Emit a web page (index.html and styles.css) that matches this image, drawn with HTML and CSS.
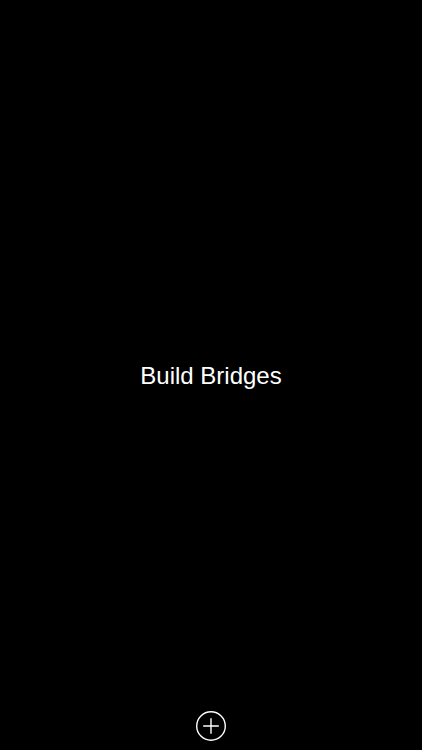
FILE: index.html
```html
<!DOCTYPE html>
<html lang="en">
<head>
<meta charset="utf-8">
<title>Build Bridges</title>
<link rel="stylesheet" href="styles.css">
</head>
<body>
<div class="screen">
  <div class="spacer"></div>
  <h1 class="title">Build Bridges</h1>
  <div class="footer">
    <button class="add-btn" aria-label="Add">
      <svg width="32" height="32" viewBox="0 0 32 32">
        <circle cx="16" cy="16" r="14.3" fill="none" stroke="#fff" stroke-width="1.4"/>
        <path d="M16 8.2V23.8M8.2 16H23.8" stroke="#fff" stroke-width="1.4" fill="none"/>
      </svg>
    </button>
  </div>
</div>
</body>
</html>
```

FILE: styles.css
```css
html, body {
  margin: 0;
  padding: 0;
  background: #000;
}
.screen {
  height: 750px;
  display: grid;
  grid-template-rows: 1fr auto 1fr;
  font-family: "Liberation Sans", Arial, sans-serif;
  color: #fff;
}
.title {
  margin: 0;
  padding-top: 2px;
  font-size: 24px;
  font-weight: normal;
  line-height: 24px;
  text-align: center;
}
.footer {
  display: flex;
  justify-content: center;
  align-items: flex-end;
  padding-bottom: 8px;
}
.add-btn {
  background: none;
  border: 0;
  padding: 0;
  width: 32px;
  height: 32px;
  display: block;
}
.add-btn svg {
  display: block;
}
```
